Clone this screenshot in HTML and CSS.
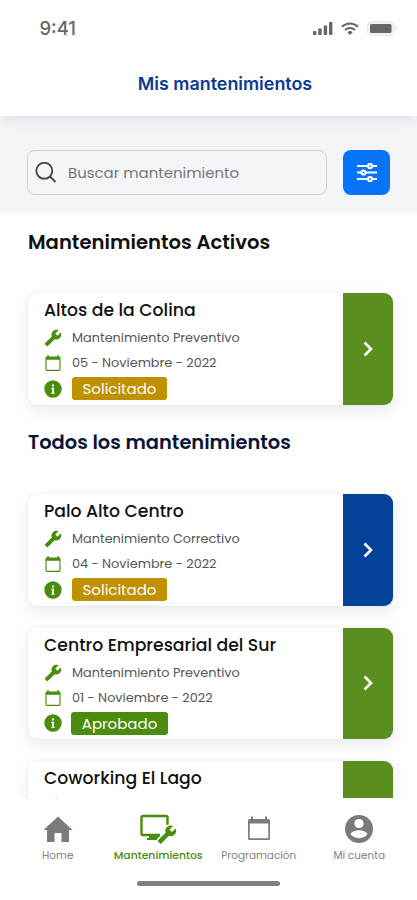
FILE: index.html
```html
<!DOCTYPE html>
<html lang="es">
<head>
<meta charset="utf-8">
<meta name="viewport" content="width=device-width, initial-scale=1">
<title>Mis mantenimientos</title>
<link rel="stylesheet" href="styles.css">
</head>
<body>
<svg class="sprite" aria-hidden="true">
  <symbol id="wrench" viewBox="0 0 24 24"><path transform="matrix(-1 0 0 1 24 0)" d="M22.7 19l-9.1-9.1c.9-2.3.4-5-1.5-6.9-2-2-5-2.4-7.4-1.3L9 6 6 9 1.6 4.7C.4 7.1.9 10.1 2.9 12.1c1.9 1.9 4.6 2.4 6.9 1.5l9.1 9.1c.4.4 1 .4 1.4 0l2.3-2.3c.5-.4.5-1.1.1-1.4z"/></symbol>
  <symbol id="calendar" viewBox="0 0 16 17"><path fill-rule="evenodd" d="M2 1.500V0h1.500v1.500h9V0H14v1.500h.5A1.500 1.500 0 0 1 16 3v12.500a1.500 1.500 0 0 1-1.500 1.500h-13A1.500 1.500 0 0 1 0 15.500V3a1.500 1.500 0 0 1 1.500-1.500zM1.200 5v10.200q0 .6.6.6h12.400q.6 0 .6-.6V5z"/></symbol>
  <symbol id="info" viewBox="0 0 18 18"><path fill-rule="evenodd" d="M9 .3a8.700 8.700 0 1 0 0 17.400A8.700 8.700 0 0 0 9 .3zM8 4.500h2v2H8zM7.200 7.800H10v5h.8v1H7.200v-1H8v-4h-.8z"/></symbol>
  <symbol id="chevron" viewBox="0 0 10 16"><path d="M1.500 1.500 8 8l-6.500 6.500" fill="none" stroke="#fff" stroke-width="2.600"/></symbol>
</svg>
<div class="phone">
  <header class="header">
    <div class="status">
      <span class="time">9:41</span>
      <span class="signals">
        <svg width="20" height="13" viewBox="0 0 20 13" fill="#666"><rect y="9" width="3.400" height="4" rx=".8"/><rect x="5.300" y="6.500" width="3.400" height="6.500" rx=".8"/><rect x="10.700" y="3.500" width="3.400" height="9.500" rx=".8"/><rect x="16" width="3.400" height="13" rx=".8"/></svg>
        <svg width="18" height="13" viewBox="0 0 18 13" fill="none" stroke="#666" stroke-width="2"><path d="M1 4.800a11.500 11.500 0 0 1 16 0M4 8a7.300 7.300 0 0 1 10 0"/><path d="M9 13 6.300 10.200a4 4 0 0 1 5.400 0z" fill="#666" stroke="none"/></svg>
        <svg width="30" height="15" viewBox="0 0 30 15"><rect x=".5" y=".5" width="26" height="14" rx="4.500" fill="#f1f2f2" stroke="#e8e9e9"/><path d="M28 5q3 2.500 0 5z" fill="#d8d8d8"/><rect x="3" y="3" width="21.500" height="9" rx="1.500" fill="#666"/></svg>
      </span>
    </div>
    <h1 class="title">Mis mantenimientos</h1>
  </header>
  <section class="search">
    <div class="field">
      <svg width="22" height="22" viewBox="0 0 22 22" fill="none" stroke="#4a4a4a" stroke-width="1.900"><circle cx="9.300" cy="8.800" r="8"/><path d="m15 14.500 5.500 5.500"/></svg>
      <span class="placeholder">Buscar mantenimiento</span>
    </div>
    <div class="filter">
      <svg width="20" height="20" viewBox="0 0 20 20" fill="#0874f9" stroke="#fff" stroke-width="2.200"><path d="M0 3h20M0 9.500h20M0 16h20"/><circle cx="13" cy="3" r="2"/><circle cx="6.500" cy="9.500" r="2"/><circle cx="13" cy="16" r="2"/></svg>
    </div>
  </section>
  <main class="content">
    <h2 class="heading">Mantenimientos Activos</h2>
    <article class="card">
      <div class="body">
        <h3 class="name">Altos de la Colina</h3>
        <div class="row"><svg class="icon"><use href="#wrench"/></svg><span class="kind">Mantenimiento Preventivo</span></div>
        <div class="row"><svg class="icon cal"><use href="#calendar"/></svg><span class="date">05 - Noviembre - 2022</span></div>
        <div class="row"><svg class="icon"><use href="#info"/></svg><span class="badge">Solicitado</span></div>
      </div>
      <div class="go"><svg class="chev"><use href="#chevron"/></svg></div>
    </article>
    <h2 class="heading navy">Todos los mantenimientos</h2>
    <article class="card">
      <div class="body">
        <h3 class="name">Palo Alto Centro</h3>
        <div class="row"><svg class="icon"><use href="#wrench"/></svg><span class="kind">Mantenimiento Correctivo</span></div>
        <div class="row"><svg class="icon cal"><use href="#calendar"/></svg><span class="date">04 - Noviembre - 2022</span></div>
        <div class="row"><svg class="icon"><use href="#info"/></svg><span class="badge">Solicitado</span></div>
      </div>
      <div class="go blue"><svg class="chev"><use href="#chevron"/></svg></div>
    </article>
    <article class="card">
      <div class="body">
        <h3 class="name">Centro Empresarial del Sur</h3>
        <div class="row"><svg class="icon"><use href="#wrench"/></svg><span class="kind">Mantenimiento Preventivo</span></div>
        <div class="row"><svg class="icon cal"><use href="#calendar"/></svg><span class="date">01 - Noviembre - 2022</span></div>
        <div class="row"><svg class="icon"><use href="#info"/></svg><span class="badge ok">Aprobado</span></div>
      </div>
      <div class="go"><svg class="chev"><use href="#chevron"/></svg></div>
    </article>
    <article class="card">
      <div class="body">
        <h3 class="name">Coworking El Lago</h3>
        <div class="row"><svg class="icon"><use href="#wrench"/></svg></div>
      </div>
      <div class="go"></div>
    </article>
  </main>
  <nav class="nav">
    <div class="tabs">
      <div class="tab"><svg width="30" height="30" viewBox="0 0 30 30"><path fill="#7b7b7b" d="M15 2.500 29.500 16H26v12h-7.500v-9h-7v9H4V16H.5z"/></svg><span>Home</span></div>
      <div class="tab active"><svg width="38" height="30" viewBox="0 0 38 30"><path d="M28.500 12V3.500Q28.500 2 27 2H4Q2.500 2 2.500 3.500v16Q2.500 21 4 21h17" fill="none" stroke="#4a8c0c" stroke-width="2.400"/><path fill="#4a8c0c" d="M10 21h12l-3 5H8v-2h2z"/><svg x="18" y="10.500" width="20" height="20" class="over"><use href="#wrench" fill="#4a8c0c" stroke="#fefefe" stroke-width="4"/><use href="#wrench" fill="#4a8c0c"/></svg></svg><span>Mantenimientos</span></div>
      <div class="tab"><svg width="22" height="30" viewBox="0 0 22 30"><path fill="#7b7b7b" fill-rule="evenodd" d="M3 4V1.500h2V4h12V1.500h2V4h1.500Q22 4 22 5.500v18q0 1.500-1.500 1.500h-19Q0 25 0 23.500v-18Q0 4 1.500 4zM1.700 8.500v14.800h18.600V8.500z" transform="translate(0 1)"/></svg><span>Programación</span></div>
      <div class="tab"><svg width="30" height="30" viewBox="0 0 30 30"><circle cx="15" cy="15" r="14" fill="#7b7b7b"/><circle cx="15" cy="9.500" r="4.600" fill="#fff"/><path d="M6.500 20c3-5 14-5 17 0-3 5.500-14 5.500-17 0z" fill="#fff"/></svg><span>Mi cuenta</span></div>
    </div>
    <div class="homebar"></div>
  </nav>
</div>
</body>
</html>
```

FILE: styles.css
```css
* { box-sizing: border-box; margin: 0; padding: 0; }
body { font-family: Poppins, Inter, "Open Sans", sans-serif; background: #fff; color: #111; }
.sprite { position: absolute; width: 0; height: 0; }
.phone { width: 417px; height: 900px; display: flex; flex-direction: column; overflow: hidden; background: #fefefe; }
.header { height: 116px; flex: none; background: #fefefe; box-shadow: 0 2px 14px rgba(60, 70, 85, .14); z-index: 1; }
.status { display: flex; justify-content: space-between; align-items: center; height: 56px; padding: 0 20px 0 39.500px; }
.time { font: 500 18.400px/24px Inter, sans-serif; color: #666; }
.signals { display: flex; align-items: center; gap: 8px; }
.title { font: 600 17.900px/24px Inter, sans-serif; color: #0b3a92; text-align: center; padding: 16px 0 0 33px; }
.search { height: 97px; flex: none; background: #f3f5f8; display: flex; gap: 16px; padding: 34px 27px 0; }
.field { width: 300px; height: 45px; border: 1.500px solid #cfd1d3; border-radius: 8px; display: flex; align-items: center; gap: 11px; padding-left: 7px; }
.placeholder { font-size: 14.950px; color: #777; }
.filter { width: 47px; height: 45px; border-radius: 8px; background: #0874f9; display: flex; align-items: center; justify-content: center; }
.content { height: 585px; flex: none; overflow: hidden; padding: 15px 24px 0 28px; }
.heading { font-size: 19.600px; line-height: 28px; font-weight: 600; white-space: nowrap; margin-bottom: 37px; }
.navy { font-size: 19.450px; color: #0b1538; margin-top: 24.700px; }
.card { display: flex; width: 365px; height: 111.500px; border-radius: 9px; background: #fff; box-shadow: 0 5px 13px rgba(60, 80, 95, .1), 0 0 2px rgba(60, 70, 80, .1); margin-bottom: 22px; overflow: hidden; }
.body { flex: 1; padding: 5px 0 0 16px; }
.name { font-size: 17.250px; line-height: 25px; font-weight: 500; white-space: nowrap; margin-bottom: 2.300px; }
.row { display: flex; align-items: center; height: 25.300px; gap: 10px; font-size: 12.850px; color: #555; white-space: nowrap; }
.icon { width: 18px; height: 18px; fill: #4a8c0c; }
.cal { height: 16px; }
.badge { width: 95px; height: 23px; border-radius: 3px; background: #bf9000; color: #fff; font-size: 15px; line-height: 24px; text-align: center; }
.ok { background: #4a8c0c; width: 97px; margin-left: -1px; }
.go { width: 50.500px; background: #5a8e1e; display: flex; align-items: center; justify-content: center; }
.blue { background: #034298; }
.chev { width: 10px; height: 16px; }
.nav { flex: 1; background: #fefefe; border-radius: 0 0 28px 28px; }
.tabs { display: flex; padding: 16px 7.500px 0; }
.tab { width: 100.500px; flex: none; display: flex; flex-direction: column; align-items: center; font-size: 10.500px; line-height: 14px; color: #858585; gap: 5px; white-space: nowrap; }
.over { overflow: visible; }
.active { color: #4a8c0c; font-weight: 500; font-size: 10.800px; }
.homebar { width: 143px; height: 5px; border-radius: 3px; background: #808080; margin: 18px auto 0; }
```
